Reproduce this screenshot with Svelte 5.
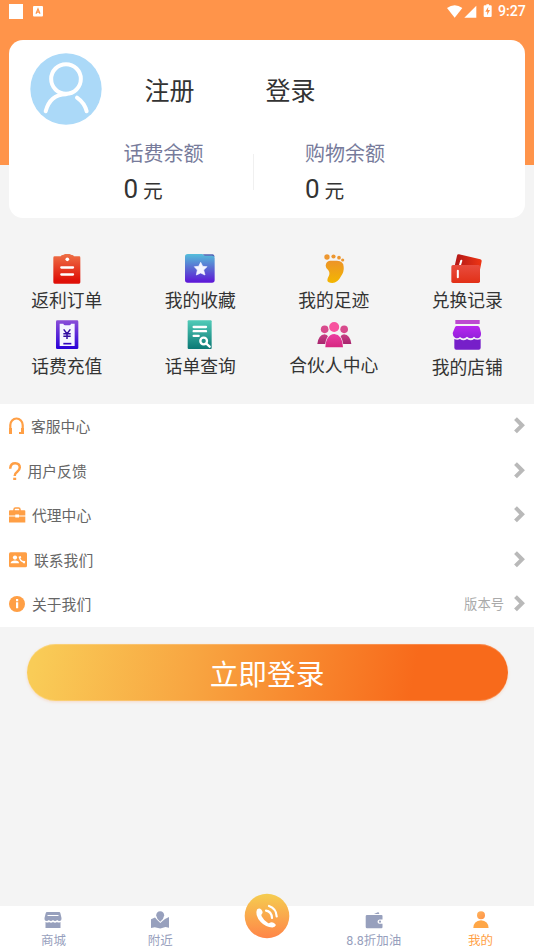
<script>
  const services = [
    { icon: 'order', label: '返利订单', box: '86 42 108 90' },
    { icon: 'favorite', label: '我的收藏', box: '487 42 108 90' },
    { icon: 'foot', label: '我的足迹', box: '107 42 108 90' },
    { icon: 'cards', label: '兑换记录', box: '508 42 108 90' },
    { icon: 'recharge', label: '话费充值', box: '86 240 108 90' },
    { icon: 'query', label: '话单查询', box: '487 240 108 90' },
    { icon: 'partner', label: '合伙人中心', box: '107 240 108 90' },
    { icon: 'shop', label: '我的店铺', box: '508 240 108 90' }
  ];
  const menu = [
    { icon: 'headset', label: '客服中心', width: 16, gap: 6 },
    { icon: 'question', label: '用户反馈', width: 13, gap: 5.5 },
    { icon: 'briefcase', label: '代理中心', width: 17, gap: 6 },
    { icon: 'contact', label: '联系我们', width: 19, gap: 6 },
    { icon: 'info', label: '关于我们', width: 17, gap: 6, note: '版本号' }
  ];
  const tabs = [
    { icon: 'mall', label: '商城' },
    { icon: 'near', label: '附近' },
    { icon: 'call', label: '' },
    { icon: 'wallet', label: '8.8折加油' },
    { icon: 'mine', label: '我的', active: true }
  ];
</script>

<svelte:head><title>我的</title></svelte:head>

<div class="screen">
  <header>
    <div class="status">
      <i class="square"></i>
      <svg class="ime" width="10" height="11" viewBox="0 0 10 11"><rect width="10" height="10.5" rx="1" fill="#fff"/><path d="M3 7.7 5 2.8l2 4.9M3.7 6.2h2.6" fill="none" stroke="#ff944a" stroke-width="1.2"/></svg>
      <span class="fill"></span>
      <svg class="signals" width="46" height="14" viewBox="143 10 138 42" fill="#fff"><path d="M143 22Q166 6 189 22L166 51Z"/><path d="M231 15V51H195Z"/><path d="M256 14h5v-3h8v3h5q3 0 3 3v29q0 3-3 3h-18q-3 0-3-3V17q0-3 3-3Z"/><path d="m267 18-9 15h6l-1 11 9-16h-6Z" fill="#ff944a"/></svg>
      <time>9:27</time>
    </div>
  </header>

  <section class="card">
    <div class="account">
      <svg class="avatar" width="72" height="72" viewBox="90 159 216 216"><circle cx="198" cy="267" r="107" fill="#abd9f8"/><g fill="none" stroke="#fff" stroke-width="12" stroke-linecap="round"><circle cx="198" cy="237" r="44.500"/><path d="M137 334Q150 284 198 283M231 293Q254 309 260 334"/></g></svg>
      <span class="join">注册</span>
      <span>登录</span>
    </div>
    <div class="balances">
      <div class="balance"><span>话费余额</span><p><b>0</b> 元</p></div>
      <i class="divider"></i>
      <div class="balance"><span>购物余额</span><p><b>0</b> 元</p></div>
    </div>
  </section>

  <section class="services">
    {#each services as s}
      <div class="service {s.icon}">
        <svg width="36" height="30" viewBox={s.box}>
          {#if s.icon === 'order'}
            <defs><linearGradient id="g-order" x2="0" y2="1"><stop stop-color="#ee7247"/><stop offset=".9" stop-color="#df1008"/></linearGradient></defs>
            <path d="M103 49H121Q122 45 130 44Q141 38 152 44Q160 45 161 49H177Q180 49 180 53V127Q180 131 176 131H103Q99 131 99 127V53Q99 49 103 49Z" fill="url(#g-order)"/><circle cx="141" cy="58" r="5.500" fill="#fff"/><path d="M123 82.500h35M123 103.500h35" stroke="#fff" stroke-width="7" stroke-linecap="round"/>
          {:else if s.icon === 'favorite'}
            <defs><linearGradient id="g-fav" x2="0" y2="1"><stop stop-color="#54bedb"/><stop offset=".5" stop-color="#5a6ad2"/><stop offset="1" stop-color="#5d14d8"/></linearGradient></defs>
            <path d="M504 42H548L553 46H578Q585 47 585 54V120Q585 128 577 128H504Q496 128 496 120V50Q496 42 504 42Z" fill="url(#g-fav)"/><path d="M549 43H579Q584 44 585 51Q581 47 576 47H555Z" fill="#5063b4"/><path d="m543 67 6 12 13 1-10 10 4 15-13-6-13 6 3-15-9-10 13-1Z" fill="#f5f5ff" stroke="#f5f5ff" stroke-width="2" stroke-linejoin="round"/>
          {:else if s.icon === 'foot'}
            <defs><linearGradient id="g-foot" x2="0" y2="1"><stop stop-color="#ed9428"/><stop offset="1" stop-color="#f3b600"/></linearGradient></defs>
            <g fill="#ed9730"><circle cx="140" cy="51" r="8"/><circle cx="159.500" cy="49.500" r="6.300"/><circle cx="176" cy="53" r="5.500"/><circle cx="187" cy="60" r="4.800"/></g><path d="M149 62H170Q190 63 190 80Q192 94 182 109Q172 129 156 129Q142 129 141 121Q141 115 145 109Q150 99 144 91Q136 84 136 77Q137 63 149 62Z" fill="url(#g-foot)"/>
          {:else if s.icon === 'cards'}
            <defs><linearGradient id="g-back"><stop stop-color="#ad1517"/><stop offset="1" stop-color="#ef3514"/></linearGradient><linearGradient id="g-front" x2="0" y2="1"><stop stop-color="#e84c3e"/><stop offset="1" stop-color="#e23017"/></linearGradient></defs>
            <path d="M538 43 602 58Q607 59 606 64L597 109 521 95 532 47Q533 42 538 43Z" fill="url(#g-back)"/><path d="m545 62-4 13" stroke="#fff" stroke-width="6" stroke-linecap="round"/><rect x="515" y="75" width="86" height="54" rx="5" fill="url(#g-front)"/><path d="M534.500 92v20" stroke="#fff" stroke-width="6" stroke-linecap="round"/>
          {:else if s.icon === 'recharge'}
            <defs><linearGradient id="g-rec" x2="0" y2="1"><stop stop-color="#8a4ed8"/><stop offset="1" stop-color="#2900d8"/></linearGradient></defs>
            <rect x="107" y="241" width="67" height="86" rx="4" fill="url(#g-rec)"/><path d="M118 251H129Q130 256 135 256H147Q151 256 152 251H163V318H118Z" fill="#f5f5ff"/><path d="m130 268 10 13 10-13M140 281v16M129 281h22M129 289h22" fill="none" stroke="#320da1" stroke-width="4.500"/><path d="M129 311h24" stroke="#3206bd" stroke-width="5"/>
          {:else if s.icon === 'query'}
            <defs><linearGradient id="g-query" x2="0" y2="1"><stop stop-color="#51cbb8"/><stop offset="1" stop-color="#0b7975"/></linearGradient></defs>
            <rect x="504" y="241" width="72" height="86" rx="3" fill="url(#g-query)"/><g fill="none" stroke="#fff" stroke-width="7" stroke-linecap="round"><path d="M522 261h37M522 273.500h37M522 287.500h15"/><circle cx="552" cy="303" r="10"/><path d="m560 311 10 9"/></g>
          {:else if s.icon === 'partner'}
            <defs><linearGradient id="g-part" x2="0" y2="1"><stop stop-color="#eb3ea1"/><stop offset="1" stop-color="#d62781"/></linearGradient><linearGradient id="g-side" x2="0" y2="1"><stop stop-color="#c74085"/><stop offset="1" stop-color="#a7246e"/></linearGradient></defs>
            <g fill="#d84a8c"><circle cx="133" cy="268" r="11.500"/><circle cx="191.500" cy="268" r="11.500"/></g><path d="M111 312Q114 285 133 283Q147 284 150 312ZM174 312Q177 284 191 283Q210 285 213 312Z" fill="url(#g-side)"/><path d="M133 324Q136 279 162 279Q187 279 190 324Z" fill="#f5f5f5"/><circle cx="161.500" cy="261" r="17" fill="#f5f5f5"/><circle cx="161.500" cy="261" r="15" fill="#f8539f"/><path d="M135 322Q137 284 162 282Q186 284 188 322Z" fill="url(#g-part)"/>
          {:else}
            <defs><linearGradient id="g-shop" x2="0" y2="1"><stop stop-color="#b727ee"/><stop offset="1" stop-color="#9420db"/></linearGradient></defs>
            <path d="M527 240h73v12h-73Z" fill="#bd49d0"/><path d="M524 297Q533 302 541 297Q551 305 562 297Q574 305 583 297Q594 302 603 297V323Q603 329 597 329H530Q524 329 524 323Z" fill="#761fc9"/><path d="M531 258H594Q598 258 600 263L604 279Q605 291 597 294Q589 296 583 290Q574 300 562 290Q551 300 541 291Q534 297 526 293Q519 288 519 279L526 262Q528 258 531 258Z" fill="url(#g-shop)"/>
          {/if}
        </svg>
        <span>{s.label}</span>
      </div>
    {/each}
  </section>

  <section class="menu">
    {#each menu as m}
      <div class="row">
        <svg class="lead" style:width="{m.width}px" style:margin-right="{m.gap}px" height="18" viewBox="0 0 {m.width} 18" fill="#ff9f45">
          {#if m.icon === 'headset'}
            <path d="M1.300 16V8a6.200 6.500 0 0 1 12.400 0v8" fill="none" stroke="#ff9f45" stroke-width="2.200"/><path d="M0 11h3v6H0zM12 11h3v6h-5v-2h2z"/>
          {:else if m.icon === 'question'}
            <path d="M1.200 6.800Q1.400 1.300 6.200 1.300Q10.800 1.400 10.800 5.600Q10.800 7.800 8 10Q5.700 11.500 5.700 14" fill="none" stroke="#ff9f45" stroke-width="2.500"/><path d="M4.200 15.700h3v2.300h-3z"/>
          {:else if m.icon === 'briefcase'}
            <path d="M5 5V3.500Q5 2 6.500 2h3Q11 2 11 3.500V5" fill="none" stroke="#ff9f45" stroke-width="1.500"/><path d="M1 4.300h14.500q.8 0 .8.800V9.500H10V8.500H6.300v1H0V5.100q0-.8 1-.8ZM0 10.400h6.300v1H10v-1h6.300v6H0Z"/>
          {:else if m.icon === 'contact'}
            <rect y="1.300" width="18" height="15" rx="1.500"/><g fill="#fff"><circle cx="6" cy="6.600" r="2.100"/><path d="M1.500 12.300Q2 9.500 6 9.500T10 12.300Z"/></g><path d="M10.600 6.200Q10.600 10.300 16 11.200" fill="none" stroke="#fff" stroke-width="1.300"/><path d="m10.600 5.400.6 1.800M14.200 10.800l1.700.5" fill="none" stroke="#fff" stroke-width="2.300"/>
          {:else}
            <circle cx="8" cy="9" r="8"/><path d="M7 4h2.200v2.200H7zM7 7.300h2.200v6H7z" fill="#fff"/>
          {/if}
        </svg>
        <span class="label">{m.label}</span>
        <span class="fill"></span>
        {#if m.note}<small>{m.note}</small>{/if}
        <svg class="chevron" width="11" height="17" viewBox="0 0 11 17"><path d="m1.500 1.700 6.600 6.600-6.600 6.600" fill="none" stroke="#b9b9b9" stroke-width="4"/></svg>
      </div>
    {/each}
  </section>

  <button>立即登录</button>

  <nav>
    {#each tabs as t}
      <div class="tab" class:active={t.active}>
        {#if t.icon === 'call'}
          <svg class="call" width="46" height="46" viewBox="0 0 46 46"><defs><linearGradient id="g-call" x2="0" y2="1"><stop stop-color="#f5cd50"/><stop offset="1" stop-color="#ff8548"/></linearGradient></defs><circle cx="23" cy="23" r="22.300" fill="url(#g-call)"/><path d="M13 16.500Q15.300 14.600 17.300 16.500Q19.800 19.500 17.600 21.200Q17 22 17.800 23.400Q20 27.700 24 30Q25 30.600 26.300 29.600Q29.500 28.300 32 32Q31 34.200 28.500 34.400Q22 34.500 16.700 29Q10.500 22 13 16.500Z" fill="#fff"/><path d="M22 17.700Q27.500 18.500 28 25M25 13Q32.300 15.500 32.700 23.500" fill="none" stroke="#fff" stroke-width="2.200" stroke-linecap="round"/></svg>
        {:else}
          <svg width="20" height="18" viewBox="0 0 20 18" fill="#97a0bd">
            {#if t.icon === 'mall'}
              <path d="M4 1h12q1.200 0 1.400 1.200L18.500 7q.2 3-2 3Q15 10 14.200 9Q12 11 10 9Q8 11 5.800 9Q5 10 3.500 10Q1.300 10 1.500 7l1.200-4.800Q3 1 4 1Z"/><path d="M4.500 4.500h11" stroke="#fff"/><path d="M2.500 11Q5 12 6 11q2 1.500 4 0q2 1.500 4 0q1.500 1 3.500 0v6h-15Z"/>
            {:else if t.icon === 'near'}
              <path d="M1 8.300 5 6.500Q7 9 10.300 12Q13 9.500 15 8L19 6v10.700l-3.500-.8-5.200 1.500-5.500-1.200L1 17Z"/><path d="M10.200.3q3.900.2 4 4.200Q14 7.500 10.200 10.700Q6.500 7.500 6.200 4.500Q6.300.5 10.200.3Z"/>
            {:else if t.icon === 'wallet'}
              <path d="m10 3 4.400-2 1 2Z"/><path d="M3 4h14.500q1 0 1 1v3.500h-3q-2 .2-2 2.200t2 2.100h3V16q0 1.200-1 1.200H3q-1.300 0-1.300-1.200V5.200Q1.700 4 3 4Z"/><circle cx="16" cy="10.700" r="1.100"/>
            {:else}
              <defs><linearGradient id="g-head" x2="1" y2="1"><stop stop-color="#ffb45d"/><stop offset="1" stop-color="#ff9145"/></linearGradient></defs><circle cx="10" cy="4.300" r="4" fill="url(#g-head)"/><path d="M2.300 17Q2.500 10 10 9.300Q17.300 10 17.600 17Z" fill="#ffa747"/>
            {/if}
          </svg>
          <span>{t.label}</span>
        {/if}
      </div>
    {/each}
  </nav>
</div>

<style>
  .screen { width: 534px; height: 950px; display: flex; flex-direction: column; background: #f4f4f4; font-family: Roboto, "Noto Sans CJK SC", sans-serif; overflow: hidden; }
  svg { display: block; flex: none; }
  .fill { flex: 1; }
  header { height: 165px; flex: none; background: #ff944a; }
  .status { display: flex; align-items: center; height: 23px; padding: 0 8px 0 9px; }
  .square { width: 14px; height: 15px; margin-top: -1px; background: #fff; }
  .ime { margin-left: 10px; }
  .signals { margin-top: -2px; margin-right: 1px; }
  time { width: 28px; margin-left: 4px; color: #fff; font-size: 14.200px; font-weight: 500; line-height: 23px; }
  .card { height: 178px; flex: none; margin: -125px 9px 0; box-sizing: border-box; padding: 13px 0 0 21px; background: #fff; border-radius: 14px; }
  .account { display: flex; align-items: center; height: 72px; color: #333; font-size: 25px; }
  .avatar { margin-right: 42.500px; }
  .join { width: 121px; }
  .balances { display: flex; margin: 16px 0 0 93.500px; }
  .balance { width: 129.500px; }
  .balance span { display: block; color: #777b9b; font-size: 20px; line-height: 26px; }
  .balance p { margin: 6px 0 0; height: 32px; font-size: 19.700px; line-height: 32px; color: #333; }
  .balance b { font-size: 26px; font-weight: 400; }
  .divider { width: 1px; height: 36px; margin: 13px 51px 0 0; background: #f0f0f0; }
  .services { display: grid; grid-template-columns: repeat(4, 1fr); grid-auto-rows: 66px; height: 150px; flex: none; padding-top: 36px; box-sizing: border-box; }
  .service { display: flex; flex-direction: column; align-items: center; color: #333; font-size: 17.800px; line-height: 24px; }
  .service span { margin-top: 5px; white-space: nowrap; }
  .service.partner span { margin-top: 4px; }
  .service.shop span { margin-top: 6px; }
  .menu { flex: none; margin-top: 36px; background: #fff; }
  .row { display: flex; align-items: center; height: 44.500px; padding: 0 9.500px 0 9px; color: #666; font-size: 14.800px; line-height: 22px; }
  .label { margin-top: 2px; }
  .chevron { margin-top: -1px; }
  small { margin: 2px 9.500px 0 0; color: #aaa; font-size: 13.300px; }
  button { flex: none; width: 481px; height: 57px; margin: 17px 0 0 26.500px; padding: 5px 0 0; border: 0; border-radius: 28.500px; background: linear-gradient(100deg, #f9cc57 2%, #f8a541 35%, #f86a1b 80%); box-shadow: inset 0 1px #fff3, inset 0 -1px #fff3, 0 1px 3px #ff944a44; color: #fff; font: 28.700px/52px Roboto, "Noto Sans CJK SC", sans-serif; }
  nav { display: flex; height: 44px; flex: none; margin-top: auto; background: #fff; }
  .tab { flex: 1 1 0; display: flex; flex-direction: column; align-items: center; padding-top: 5px; color: #97a0bd; font-size: 12.500px; line-height: 18px; white-space: nowrap; }
  .tab span { margin-top: 3px; }
  .tab.active { color: #ff9f45; }
  .call { margin-top: -18px; }
</style>
